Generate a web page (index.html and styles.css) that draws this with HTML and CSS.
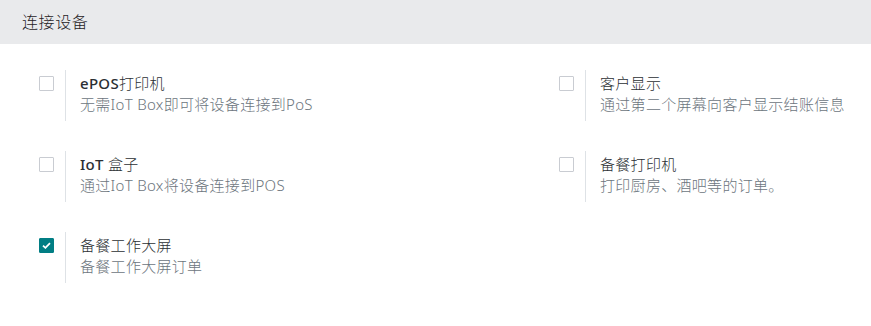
FILE: index.html
```html
<!DOCTYPE html>
<html lang="zh-Hans">
<head>
    <meta charset="UTF-8">
    <meta name="viewport" content="width=device-width, initial-scale=1.0">
    <title>连接设备</title>
    <link rel="stylesheet" href="styles.css">
</head>
<body>
    <h2 class="section-title">连接设备</h2>

    <div class="settings">
        <div class="setting-box">
            <div class="left-pane"><span class="check"></span></div>
            <div class="right-pane">
                <div class="label"><span class="latin">ePOS</span>打印机</div>
                <div class="desc">无需IoT Box即可将设备连接到PoS</div>
            </div>
        </div>
        <div class="setting-box">
            <div class="left-pane"><span class="check"></span></div>
            <div class="right-pane">
                <div class="label">客户显示</div>
                <div class="desc">通过第二个屏幕向客户显示结账信息</div>
            </div>
        </div>
        <div class="setting-box">
            <div class="left-pane"><span class="check"></span></div>
            <div class="right-pane">
                <div class="label"><span class="latin">IoT</span> 盒子</div>
                <div class="desc">通过IoT Box将设备连接到POS</div>
            </div>
        </div>
        <div class="setting-box">
            <div class="left-pane"><span class="check"></span></div>
            <div class="right-pane">
                <div class="label">备餐打印机</div>
                <div class="desc">打印厨房、酒吧等的订单。</div>
            </div>
        </div>
        <div class="setting-box">
            <div class="left-pane">
                <span class="check checked">
                    <svg width="9" height="7" viewBox="0 0 9 7"><path d="M1 3.6 L3.4 5.8 L8 1.2" fill="none" stroke="#fff" stroke-width="1.8"/></svg>
                </span>
            </div>
            <div class="right-pane">
                <div class="label">备餐工作大屏</div>
                <div class="desc">备餐工作大屏订单</div>
            </div>
        </div>
    </div>
</body>
</html>
```

FILE: styles.css
```css
body {
    margin: 0;
    background-color: #fff;
    font-family: 'Noto Sans', 'Noto Sans CJK SC', sans-serif;
    font-size: 15px;
    font-weight: 300;
    color: #374151;
}

.section-title {
    margin: 0;
    height: 44px;
    line-height: 44px;
    padding-left: 22px;
    background-color: #e9eaec;
    font-size: 16px;
    font-weight: 300;
    letter-spacing: 0.6px;
    color: #1f2225;
}

.settings {
    display: grid;
    grid-template-columns: 520px 1fr;
    row-gap: 30px;
    padding: 26px 0 0 39px;
}

.setting-box {
    display: flex;
}

.left-pane {
    width: 26px;
    padding-top: 6px;
}

.check {
    display: flex;
    justify-content: center;
    align-items: center;
    width: 13px;
    height: 13px;
    border: 1px solid #c9ccd2;
    border-radius: 1px;
}

.check.checked {
    background-color: #017e84;
    border-color: #017e84;
}

.right-pane {
    border-left: 1px solid #dee2e6;
    padding: 3px 0 6px 14px;
    line-height: 21px;
    letter-spacing: 0.3px;
}

.label {
    color: #2b2f33;
}

.label .latin {
    font-weight: 500;
}

.desc {
    color: #6c757d;
}
```
